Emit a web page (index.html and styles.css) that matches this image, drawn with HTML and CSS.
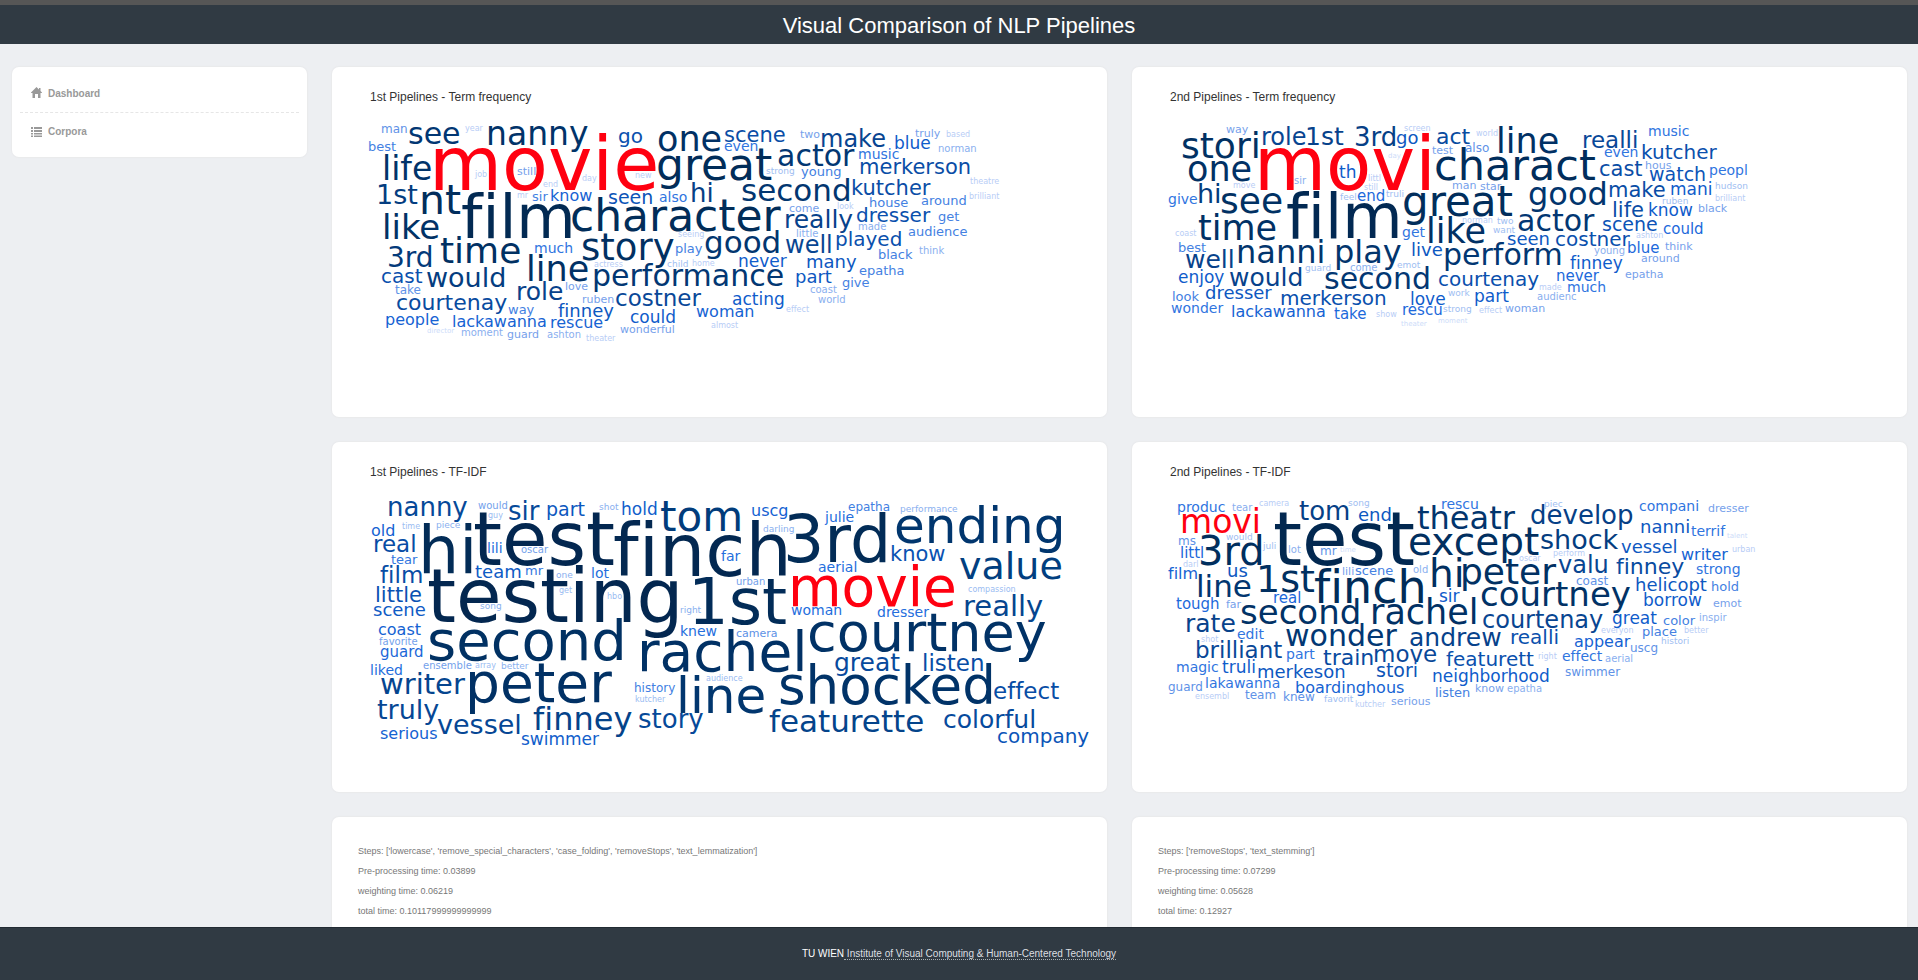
FILE: index.html
```html
<!DOCTYPE html>
<html lang="en">
<head>
<meta charset="utf-8">
<title>Visual Comparison of NLP Pipelines</title>
<link rel="stylesheet" href="styles.css">
</head>
<body>
<header class="topbar">
  <h1 class="topbar-title">Visual Comparison of NLP Pipelines</h1>
</header>

<main class="layout">
  <nav class="card sidebar">
    <a class="nav-link" href="#dashboard">
      <svg class="nav-icon" viewBox="0 0 12 12" aria-hidden="true"><path d="M5.500 0 0 5.500V6h1.500v5H4V7h3v4h2.500V6H11v-.5L9.500 4V1H8v1.500z"/></svg>
      Dashboard
    </a>
    <a class="nav-link" href="#corpora">
      <svg class="nav-icon" viewBox="0 0 12 12" aria-hidden="true"><path d="M0 1h2v2H0zM3 1h8v2H3zM0 4h2v2H0zM3 4h8v2H3zM0 7h2v1.500H0zM3 7h8v1.500H3zM0 9.500h2V11H0zM3 9.500h8V11H3z"/></svg>
      Corpora
    </a>
  </nav>

  <div class="panels">
    <section class="card chart">
      <h2 class="chart-title">1st Pipelines - Term frequency</h2>
      <svg class="cloud" id="first-frequency" role="img" aria-label="Term frequency word cloud, first pipeline"></svg>
    </section>
    <section class="card chart">
      <h2 class="chart-title">2nd Pipelines - Term frequency</h2>
      <svg class="cloud" id="second-frequency" role="img" aria-label="Term frequency word cloud, second pipeline"></svg>
    </section>
    <section class="card chart">
      <h2 class="chart-title">1st Pipelines - TF-IDF</h2>
      <svg class="cloud" id="first-tfidf" role="img" aria-label="TF-IDF word cloud, first pipeline"></svg>
    </section>
    <section class="card chart">
      <h2 class="chart-title">2nd Pipelines - TF-IDF</h2>
      <svg class="cloud" id="second-tfidf" role="img" aria-label="TF-IDF word cloud, second pipeline"></svg>
    </section>
    <section class="card details">
      <p>Steps: ['lowercase', 'remove_special_characters', 'case_folding', 'removeStops', 'text_lemmatization']</p>
      <p>Pre-processing time: 0.03899</p>
      <p>weighting time: 0.06219</p>
      <p>total time: 0.10117999999999999</p>
    </section>
    <section class="card details">
      <p>Steps: ['removeStops', 'text_stemming']</p>
      <p>Pre-processing time: 0.07299</p>
      <p>weighting time: 0.05628</p>
      <p>total time: 0.12927</p>
    </section>
  </div>
</main>

<footer class="footer">
  <p>TU WIEN<a class="footer-link" href="#institute"> Institute of Visual Computing &amp; Human-Centered Technology</a></p>
</footer>
<script src="clouds.js"></script>
</body>
</html>
```
FILE: styles.css
```css
* {
  box-sizing: border-box;
}

body {
  margin: 0;
  height: 100vh;
  overflow: hidden;
  display: flex;
  flex-direction: column;
  background: #edeff2;
  font-family: "Liberation Sans", Arial, sans-serif;
  color: #777;
}

h1, h2, p {
  margin: 0;
  font-weight: normal;
}

.topbar {
  flex: none;
  border-top: 5px solid #565656;
  background: #303a43;
  text-align: center;
}

.topbar-title {
  padding-top: 6px;
  padding-bottom: 3px;
  font-size: 22px;
  line-height: 30px;
  color: #fff;
}

.layout {
  flex: 1;
  min-height: 0;
  overflow-y: auto;
  scrollbar-width: none;
  display: grid;
  grid-template-columns: minmax(0, 295fr) minmax(0, 1575fr);
  align-items: start;
  gap: 25px;
  padding: 23px 11px 25px 12px;
}

.card {
  background: #fff;
  border-radius: 7px;
  box-shadow: 0 0 1px 1px #e9eaec;
}

.sidebar {
  padding: 7px 8px;
}

.nav-link {
  display: flex;
  align-items: center;
  gap: 5px;
  height: 38px;
  padding-left: 11px;
  font-size: 10px;
  font-weight: bold;
  color: #999;
  text-decoration: none;
}

.nav-link + .nav-link {
  border-top: 1px dashed #e6e6e6;
}

.nav-icon {
  width: 12px;
  height: 12px;
  fill: #999;
}

.panels {
  display: grid;
  grid-template-columns: repeat(2, minmax(0, 1fr));
  gap: 25px;
}

.chart {
  padding: 21px 18px 20px 28px;
}

.chart-title {
  padding-left: 10px;
  font-size: 12px;
  line-height: 18px;
  color: #333;
}

.cloud {
  display: block;
  width: 100%;
  height: 287px;
  margin-top: 4px;
  overflow: visible;
  font-family: "DejaVu Sans", Verdana, sans-serif;
  font-variant-ligatures: none;
}

.details {
  min-height: 160px;
  padding: 24px 26px;
  font-size: 9px;
  line-height: 20px;
}

.footer {
  flex: none;
  height: 53px;
  padding-top: 17px;
  border-top: 1px solid #222b33;
  background: #303a43;
  color: #fff;
  text-align: center;
  font-size: 10px;
  line-height: 18px;
}

.footer-link {
  color: #dcdfe1;
  text-decoration: none;
  border-bottom: 1px dotted #aab0b5;
}
```
FILE: clouds.js
```js
// Each entry is: word, left edge, right edge, baseline.
// Positions are on a layout grid of three units per pixel.
const GRID = 3;

const frequencyRamp = [
  [7, 205, 220, 249], [8, 184, 205, 246], [9, 160, 190, 242], [10, 138, 175, 239],
  [11, 118, 161, 235], [12, 96, 146, 231], [13, 68, 129, 226], [15, 28, 105, 219],
  [17, 15, 92, 203], [20, 10, 80, 173], [24, 8, 69, 145], [28, 3, 58, 122],
  [34, 1, 50, 102], [45, 1, 44, 88], [72, 2, 40, 80]
];

const tfidfRamp = [
  [7, 175, 200, 245], [8, 155, 188, 242], [9, 138, 176, 239], [10, 115, 161, 235],
  [11, 92, 145, 230], [12, 66, 127, 226], [14, 36, 110, 221], [16, 20, 98, 210],
  [19, 12, 87, 190], [23, 8, 77, 165], [28, 5, 70, 145], [36, 2, 64, 130],
  [46, 1, 58, 118], [54, 1, 50, 102], [64, 2, 44, 88], [76, 3, 38, 78]
];

const clouds = [
  { id: "first-frequency", top: 90, key: "movie", ramp: frequencyRamp, words: `
man 66 138 159; see 149 298 193; year 316 370 154; nanny 387 680 194; go 775 845 190;
one 897 1083 212; best 28 110 214; life 73 211 299; movie 230 885 330; job 344 379 290;
still 475 526 285; day 665 709 303; new 825 874 294; end 552 592 320; great 897 1233 299;
1st 57 172 371; nt 188 300 403; mr 473 503 354; sir 517 563 363; know 575 694 363;
seen 747 876 371; also 901 980 366; hi 998 1055 366; like 76 236 476; film 309 632 473;
character 640 1260 453; time 245 478 548; much 525 636 519; story 668 941 539;
seeing 954 1033 472; play 947 1027 519; 3rd 87 212 562; line 505 682 602;
actress 706 787 562; child 925 982 560; home 999 1061 557; cast 68 185 609;
would 201 431 620; performance 706 1267 619; take 108 181 641; role 474 607 659;
love 618 685 630; ruben 666 760 669; costner 771 1020 679; courtenay 116 438 689;
way 443 522 701; finney 597 760 711; people 81 233 735; lackawanna 282 553 740;
rescue 575 726 743; could 815 942 729; wonderful 780 943 759; director 199 284 759;
moment 307 426 768; guard 444 534 774; ashton 564 662 774; theater 679 768 782;
scene 1094 1276 185; two 1323 1379 173; make 1388 1573 200; blue 1606 1710 207;
truly 1668 1740 170; based 1762 1827 172; norman 1735 1846 215; even 1095 1189 213;
music 1497 1618 237; actor 1256 1482 257; strong 1220 1298 282; young 1325 1440 289;
merkerson 1500 1828 281; second 1146 1469 362; kutcher 1478 1713 344;
theatre 1828 1918 311; house 1530 1642 380; around 1684 1816 375;
brilliant 1832 1916 356; come 1289 1378 395; look 1436 1481 388; really 1279 1476 444;
dresser 1495 1709 426; get 1735 1796 424; made 1499 1578 451; audience 1649 1819 467;
little 1310 1372 470; good 1038 1256 518; well 1278 1414 520; played 1434 1621 497;
black 1557 1658 537; think 1679 1752 521; never 1137 1280 560; many 1342 1487 563;
epatha 1500 1630 585; part 1308 1415 608; give 1449 1527 620; coast 1349 1431 638;
world 1374 1453 669; acting 1122 1269 675; effect 1278 1347 696; woman 1011 1178 710;
almost 1052 1134 744` },

  { id: "second-frequency", top: 90, key: "movi", ramp: frequencyRamp, words: `
way 200 265 159; stori 68 293 233; role 310 434 194; 1st 443 550 194; 3rd 587 704 197;
go 711 771 193; screen 731 810 152; act 832 927 191; one 87 271 302; movi 300 806 330;
test 819 879 221; also 920 986 216; charact 830 1302 299; day 684 722 234;
th 539 586 294; sir 404 440 311; littl 627 662 304; move 223 284 323; still 612 650 331;
feel 541 586 360; end 595 671 363; truli 679 727 352; man 878 948 327; give 26 112 373;
hi 120 178 368; see 187 365 400; film 384 712 473; great 733 1057 407; time 115 345 479;
like 808 973 490; get 730 795 472; coast 45 110 467; nanni 237 486 548; play 530 723 548;
best 60 138 516; well 80 217 563; live 756 846 527; perform 856 1203 556;
enjoy 56 195 609; would 211 421 619; guard 435 511 573; come 570 653 574;
emot 712 779 563; second 498 802 628; courtenay 836 1134 619; look 39 116 662;
dresser 137 335 657; merkerson 363 680 674; love 752 854 675; work 866 931 648;
part 945 1046 665; wonder 33 189 700; lackawanna 213 496 711; take 522 619 716;
show 647 710 711; rescu 731 843 706; strong 850 934 697; theater 723 803 737;
moment 834 925 729; world 950 1010 167; line 1017 1190 218; realli 1273 1430 204;
music 1467 1589 168; even 1334 1434 231; kutcher 1450 1667 237; cast 1321 1446 287;
hous 1460 1533 267; watch 1471 1632 302; peopl 1654 1759 286; star 964 1024 330;
good 1110 1332 374; make 1349 1517 350; mani 1536 1652 346; hudson 1666 1762 327;
ruben 1508 1585 372; brilliant 1670 1754 364; life 1361 1447 410; know 1466 1598 407;
black 1617 1703 396; norman 908 994 428; two 1012 1060 432; want 999 1064 459;
actor 1074 1304 452; scene 1326 1491 453; could 1511 1626 462; seen 1045 1166 494;
costner 1187 1410 497; ashton 1431 1506 473; young 1300 1394 522; blue 1406 1497 519;
think 1514 1598 509; finney 1230 1386 567; around 1445 1555 546; never 1191 1316 603;
epatha 1399 1506 594; made 1138 1206 629; much 1226 1333 636; audienc 1130 1250 660;
effect 960 1023 698; woman 1038 1150 696` },

  { id: "first-tfidf", top: 75, key: "movie", ramp: tfidfRamp, words: `
nanny 87 323 167; would 355 439 147; guy 386 427 173; sir 447 538 179; part 564 674 168;
shot 717 775 150; hold 787 890 164; tom 903 1137 213; old 37 103 228; time 126 181 206;
piece 230 300 204; hi 190 333 339; test 345 762 316; finch 764 1274 347; real 44 164 275;
lili 386 424 279; oscar 484 563 279; far 1083 1139 302; tear 94 171 311; film 60 183 370;
team 347 480 354; mr 497 548 345; one 592 637 353; lot 697 747 354; little 50 184 426;
testing 206 952 487; get 598 636 398; hbo 744 784 418; song 361 424 447;
scene 41 193 467; right 963 1025 459; 1st 1004 1275 492; coast 55 183 525;
second 208 784 600; knew 965 1069 528; favorite 60 171 555; guard 61 187 592;
rachel 843 1328 633; ensemble 193 332 627; array 347 406 623; better 426 505 627;
liked 33 123 644; writer 62 317 703; peter 331 754 725; history 825 947 696;
kutcher 825 917 725; audience 1037 1148 662; line 962 1211 758; truly 53 236 776;
vessel 236 478 822; finney 518 815 809; story 839 1028 805; serious 64 231 837;
swimmer 484 718 854; uscg 1175 1282 168; darling 1211 1302 216; 3rd 1283 1577 306;
julie 1393 1480 186; epatha 1466 1588 152; performance 1620 1791 156;
ending 1612 2103 248; know 1595 1754 302; aerial 1377 1487 336; value 1799 2103 356;
movie 1299 1783 438; urban 1131 1212 374; compassion 1830 1962 395;
really 1818 2045 467; woman 1298 1441 465; dresser 1552 1709 471;
courtney 1350 2058 573; camera 1128 1251 530; great 1425 1617 632;
listen 1694 1866 632; shocked 1261 1893 731; effect 1904 2092 718;
featurette 1231 1685 815; colorful 1753 2019 803; company 1914 2185 849` },

  { id: "second-tfidf", top: 75, key: "movi", ramp: frequencyRamp, words: `
produc 52 195 156; tear 217 275 154; camera 297 388 137; tom 417 565 179;
song 568 626 137; end 597 690 182; theatr 773 1065 206; rescu 848 952 147;
movi 70 293 218; test 345 762 316; except 748 1136 285; ms 59 106 255;
would 200 273 239; 3rd 122 302 315; littl 63 128 293; juli 310 347 268; lot 387 422 279;
mr 484 529 285; time 539 588 276; darl 72 114 322; film 26 110 356; us 204 260 351;
1st 300 464 396; finch 465 787 428; lili 549 579 345; scene 588 697 345;
old 761 803 339; hi 818 903 380; peter 912 1188 371; line 118 271 410;
tough 50 177 447; far 200 243 443; real 342 421 428; sir 838 898 426;
second 245 595 493; rachel 640 943 493; rate 82 226 515; edit 236 311 537;
wonder 377 714 557; andrew 753 1022 557; shot 125 173 545; brilliant 109 366 593;
part 381 461 597; train 493 637 615; move 646 826 605; featurett 862 1117 618;
magic 51 175 636; truli 187 282 639; merkeson 295 553 653; stori 653 769 650;
neighborhood 826 1161 666; guard 29 125 692; lakawanna 143 355 684;
boardinghous 413 730 699; listen 829 928 711; know 947 1032 697; ensembl 104 208 716;
team 255 345 716; knew 375 462 722; favorit 491 578 725; kutcher 589 674 740;
serious 697 809 734; piec 1156 1206 140; develop 1115 1416 192; compani 1438 1616 153;
dresser 1647 1763 156; nanni 1443 1585 219; terrif 1594 1694 227; talent 1699 1763 233;
shock 1145 1374 267; vessel 1384 1551 279; writer 1565 1702 300; urban 1715 1785 275;
perform 1184 1272 287; oscar 1081 1141 302; valu 1198 1340 338; finney 1371 1569 341;
strong 1609 1737 342; coast 1250 1344 375; courtney 964 1412 437;
helicopt 1429 1638 393; hold 1657 1734 393; borrow 1455 1623 438; emot 1660 1746 440;
courtenay 972 1327 503; great 1359 1488 492; color 1511 1603 495; inspir 1619 1703 482;
everyon 1327 1416 518; place 1452 1549 528; better 1571 1646 519;
histori 1504 1586 553; realli 1057 1192 551; appear 1243 1413 561; uscg 1412 1492 576;
right 1134 1190 597; effect 1207 1325 603; aerial 1336 1416 606;
swimmer 1218 1382 648; epatha 1045 1144 696` }
];

// Unit metrics are read at 200px, where hinting does not affect them.
const pen = document.createElement("canvas").getContext("2d");
pen.font = '200px "DejaVu Sans", Verdana, sans-serif';

function shade(ramp, size) {
  let low = ramp[0];
  for (const stop of ramp) {
    if (size <= stop[0]) {
      const t = stop[0] === low[0] ? 0 : (size - low[0]) / (stop[0] - low[0]);
      const rgb = [1, 2, 3].map(i => Math.round(low[i] + t * (stop[i] - low[i])));
      return `rgb(${rgb})`;
    }
    low = stop;
  }
  return `rgb(${low.slice(1)})`;
}

for (const cloud of clouds) {
  const svg = document.getElementById(cloud.id);
  for (const entry of cloud.words.split(";")) {
    const [word, left, right, base] = entry.trim().split(" ");
    const ink = pen.measureText(word);
    const inkLeft = -ink.actualBoundingBoxLeft / 200;
    const inkRight = ink.actualBoundingBoxRight / 200;
    const size = Math.round((right - left) / GRID / (inkRight - inkLeft));
    const centre = (Number(left) + Number(right)) / 2 / GRID;
    const x = Math.round(centre - size * (inkLeft + inkRight) / 2);
    const y = Math.round((base - cloud.top) / GRID);

    const text = document.createElementNS("http://www.w3.org/2000/svg", "text");
    text.setAttribute("x", x);
    text.setAttribute("y", y);
    text.setAttribute("font-size", size);
    text.setAttribute("fill", word === cloud.key ? "#ff0010" : shade(cloud.ramp, size));
    text.textContent = word;
    svg.append(text);
  }
}
```
